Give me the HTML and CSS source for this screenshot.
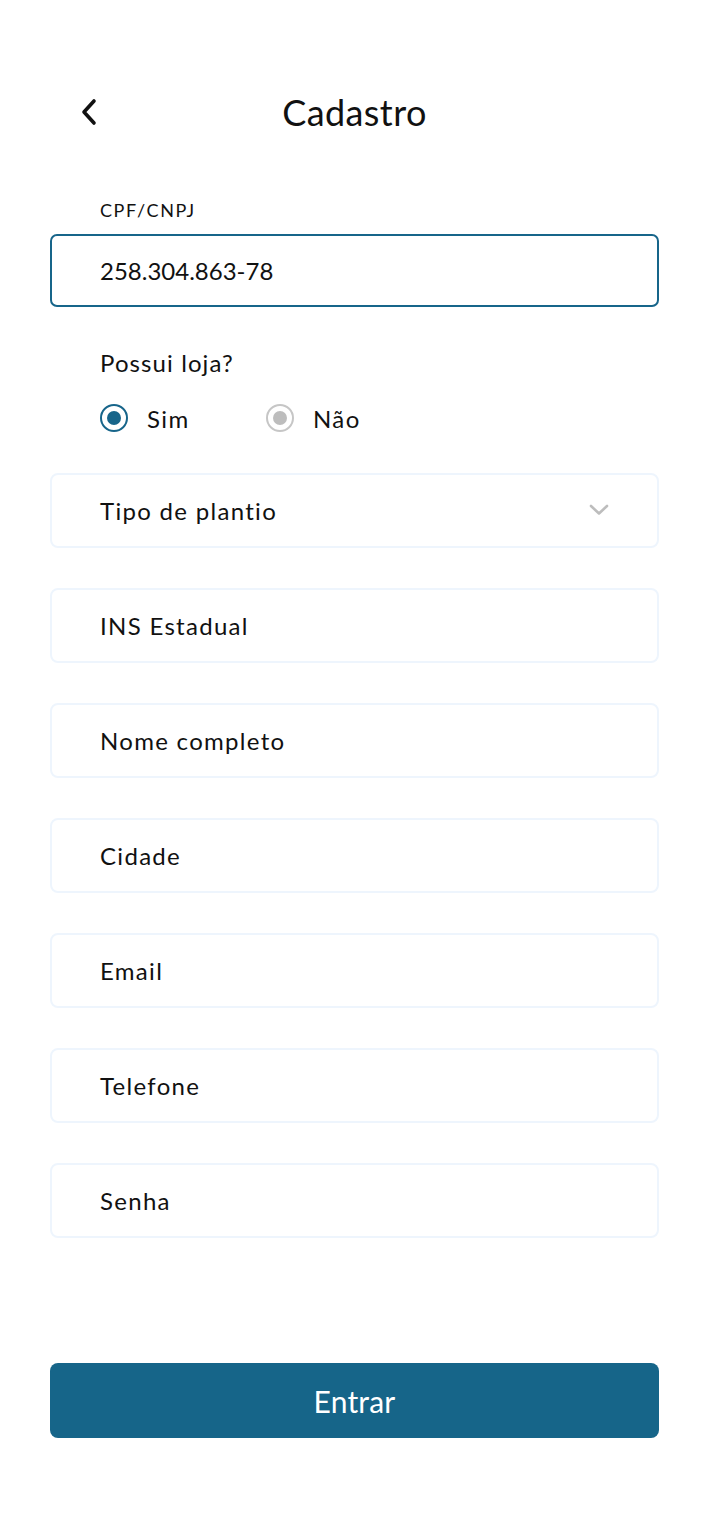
FILE: index.html
```html
<!DOCTYPE html>
<html lang="pt-BR">
<head>
<meta charset="utf-8">
<title>Cadastro</title>
<link rel="stylesheet" href="styles.css">
</head>
<body>
<main class="page">
  <header class="header">
    <button class="back" aria-label="Voltar">
      <svg width="20" height="28" viewBox="0 0 20 28"><path d="M15 3 L5 14 L15 25" fill="none" stroke="#111" stroke-width="3.6" stroke-linecap="round" stroke-linejoin="round"/></svg>
    </button>
    <h1 class="title">Cadastro</h1>
  </header>

  <div class="cpf">
    <label class="cpf-label">CPF/CNPJ</label>
    <div class="input active">258.304.863-78</div>
  </div>

  <div class="question">Possui loja?</div>
  <div class="radios">
    <div class="option">
      <span class="radio on"><span class="dot"></span></span>
      <span class="opt-text">Sim</span>
    </div>
    <div class="option">
      <span class="radio off"><span class="dot"></span></span>
      <span class="opt-text">Não</span>
    </div>
  </div>

  <div class="fields">
    <div class="input field select">
      <span>Tipo de plantio</span>
      <svg class="chev" width="20" height="12" viewBox="0 0 20 12"><path d="M2 2 L10 9.5 L18 2" fill="none" stroke="#bdbdbd" stroke-width="2.6" stroke-linecap="round" stroke-linejoin="round"/></svg>
    </div>
    <div class="input field">INS Estadual</div>
    <div class="input field">Nome completo</div>
    <div class="input field">Cidade</div>
    <div class="input field">Email</div>
    <div class="input field">Telefone</div>
    <div class="input field">Senha</div>
  </div>

  <button class="submit">Entrar</button>
</main>
</body>
</html>
```
FILE: styles.css
```css
* { box-sizing: border-box; }
html, body { margin: 0; padding: 0; background: #fff; }
body {
  font-family: "Lato", "Open Sans", sans-serif;
  font-weight: 400;
  color: #111;
}
.page {
  width: 709px;
  padding: 80px 50px 0;
}
.header {
  position: relative;
  height: 64px;
  display: flex;
  align-items: center;
  justify-content: center;
}
.back {
  position: absolute;
  left: 29px;
  top: 18px;
  background: none;
  border: 0;
  padding: 0;
  width: 20px;
  height: 28px;
}
.title {
  margin: 0;
  font-weight: 400;
  font-size: 36px;
  color: #111;
  letter-spacing: 0.4px;
}
.cpf { margin-top: 55px; }
.cpf-label {
  display: block;
  padding-left: 50px;
  font-size: 18px;
  line-height: 22px;
  margin-bottom: 13px;
  letter-spacing: 1.6px;
  color: #111;
}
.input {
  height: 74px;
  border: 2px solid #eef5fd;
  border-radius: 8px;
  padding-left: 48px;
  display: flex;
  align-items: center;
  font-size: 24px;
  letter-spacing: 1.3px;
  color: #111;
}
.input.active {
  height: 73px;
  border-color: #17658a;
  border-radius: 7px;
  letter-spacing: 0;
}
.question {
  margin-top: 41px;
  padding-left: 50px;
  font-size: 24px;
  line-height: 30px;
  letter-spacing: 1.1px;
}
.radios {
  margin-top: 25px;
  padding-left: 50px;
  display: flex;
  height: 30px;
  align-items: center;
}
.option {
  width: 166px;
  display: flex;
  align-items: center;
  gap: 19px;
  font-size: 24px;
  letter-spacing: 1.4px;
}
.radio {
  width: 28px;
  height: 28px;
  border-radius: 50%;
  border: 2.5px solid #17658a;
  display: flex;
  align-items: center;
  justify-content: center;
}
.radio .dot {
  width: 14px;
  height: 14px;
  border-radius: 50%;
  background: #17658a;
}
.radio.off { border-color: #c6c6c6; }
.radio.off .dot { background: #bdbdbd; }
.fields {
  margin-top: 40px;
  display: flex;
  flex-direction: column;
  gap: 40px;
}
.field { height: 75px; }
.select { justify-content: space-between; padding-right: 48px; }
.chev { display: block; margin-top: -2px; }
.submit {
  display: block;
  width: 100%;
  margin-top: 125px;
  height: 75px;
  border: 0;
  border-radius: 8px;
  background: #166589;
  color: #fff;
  font-family: inherit;
  font-weight: 400;
  font-size: 30px;
  letter-spacing: 0.2px;
}
```
